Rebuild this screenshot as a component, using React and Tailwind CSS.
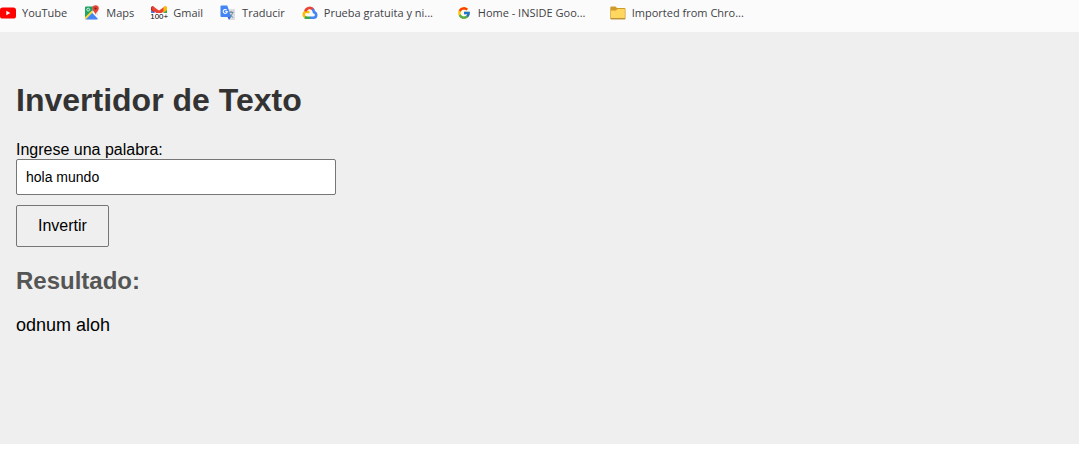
import { useState } from "react";
import { FcGoogle } from "react-icons/fc";

function YouTubeIcon() {
  return (
    <svg viewBox="0 0 16 16" className="size-4 shrink-0" aria-hidden="true">
      <rect x="0" y="2.5" width="16" height="11" rx="2.6" fill="#f00" />
      <path d="M6.3 5.7v4.6l4-2.3z" fill="#fff" />
    </svg>
  );
}

function MapsIcon() {
  return (
    <svg viewBox="0 0 16 16" className="size-4 shrink-0" aria-hidden="true">
      <rect x="1" y="1.6" width="13" height="13" rx="1.2" fill="#e8eaed" />
      <path d="M2.2 1.6H9L8.5 6 1 13V2.8q0-1.2 1.2-1.2z" fill="#1fa463" />
      <path d="M1.4 14.2 8 7.7l5.9 6.1q-.3.8-1.2.8H2.2z" fill="#4285f4" />
      <path d="M1 12.2 7.6 5.8l1.3 1.3-7.3 7.3Q1 14 1 13.2z" fill="#fdd835" />
      <path d="m8.4 7.6 1-1 4.6 4.6v2.4z" fill="#fff" />
      <circle cx="4.2" cy="4.6" r="1.4" fill="none" stroke="#fff" strokeWidth=".8" />
      <path d="M11.6.3a3.2 3.2 0 0 0-3.2 3.2c0 2.5 2.7 3.2 3.2 6.4.5-3.2 3.2-3.9 3.2-6.4A3.2 3.2 0 0 0 11.6.3z" fill="#ea4335" />
      <circle cx="11.6" cy="3.5" r="1.1" fill="#7b231b" />
    </svg>
  );
}

function GmailIcon() {
  return (
    <span className="relative size-4 shrink-0" aria-hidden="true">
      <svg viewBox="0 0 16 16" className="size-4">
        <path d="M0 3.2 3.5 5v8H1q-1 0-1-1z" fill="#4285f4" />
        <path d="M16 3.2 12.5 5v8H15q1 0 1-1z" fill="#34a853" />
        <path d="M3.5 2.5 2 1.3Q0 .6 0 2.7V5l3.5 2.7z" fill="#c5221f" />
        <path d="M1.5 1 8 5.5 14.5 1 15 4.8l-7 5.3-7-5.3z" fill="#ea4335" />
        <path d="m12.5 2.5 1.5-1.2q2-.7 2 1.4V5l-3.5 2.7z" fill="#fbbc04" />
      </svg>
      <span className="absolute inset-x-0 bottom-0 flex h-2 items-center justify-center bg-white font-['Liberation_Sans',Arial,sans-serif] text-[8px] leading-none text-black">100+</span>
    </span>
  );
}

function TranslateIcon() {
  return (
    <svg viewBox="0 0 16 16" className="size-4 shrink-0" aria-hidden="true">
      <path d="M6 4h8q1 0 1 1v9q0 1-1 1H9.7z" fill="#dadce0" />
      <path d="M8.4 7.3h5.2M11 6v1.3M12.7 7.3c-.4 2-1.6 3.6-3.2 4.7M9.5 9c.8 1.4 2 2.6 3.6 3.5" fill="none" stroke="#607d8b" strokeWidth=".9" />
      <path d="M1.5.5h5.8L11 12H1.5q-1 0-1-1V1.5q0-1 1-1z" fill="#4285f4" />
      <path d="M7.5 12H11l-2 3z" fill="#3367d6" />
      <path d="M6.7 5.1a2 2 0 1 0 .5 1.5H5.3" fill="none" stroke="#fff" strokeWidth="1.1" />
    </svg>
  );
}

function CloudIcon() {
  return (
    <svg viewBox="0 0 16 16" className="size-4 shrink-0" aria-hidden="true" fill="none" strokeWidth="2.6">
      <path d="M5 12.7a3.2 3.2 0 0 1-2.7-4.9Q3.2 6.6 4.7 6.5q1.2 0 2.3 1.6" stroke="#fbbc04" />
      <path d="M3.3 6.3C4.5 2.5 9.3 1.6 11.6 5.1" stroke="#ea4335" />
      <path d="M10.6 4.3q1.2 1.1 1.4 2.9 2.2.7 2.2 2.8 0 2.6-2.7 2.7H8" stroke="#4285f4" />
      <path d="M3 12.1q.8.6 2 .6h3.3" stroke="#34a853" />
    </svg>
  );
}

function GoogleIcon() {
  return <FcGoogle className="size-4 shrink-0 p-px" aria-hidden="true" />;
}

function FolderIcon() {
  return (
    <svg viewBox="0 0 16 16" className="size-4 shrink-0" aria-hidden="true">
      <path d="M.3 2.6q0-1 1-1H5.5L7 3h7.5q1 0 1 1v9.2q0 1-1 1H1.3q-1 0-1-1z" fill="#cf9a2a" />
      <path d="M1 5.5H6L7.5 4h7.3v8.5q0 .8-.8.8H1.8q-.8 0-.8-.8z" fill="#ffd75e" />
      <path d="M.8 13.8h14.4" stroke="#a88232" strokeWidth=".8" />
    </svg>
  );
}

const bookmarks = [
  { label: "YouTube", Icon: YouTubeIcon },
  { label: "Maps", Icon: MapsIcon },
  { label: "Gmail", Icon: GmailIcon },
  { label: "Traducir", Icon: TranslateIcon },
  { label: "Prueba gratuita y ni...", Icon: CloudIcon, long: true },
  { label: "Home - INSIDE Goo...", Icon: GoogleIcon, long: true },
  { label: "Imported from Chro...", Icon: FolderIcon, long: true },
];

export default function App() {
  const [word, setWord] = useState("hola mundo");
  const [result, setResult] = useState("odnum aloh");

  function handleSubmit(event) {
    event.preventDefault();
    setResult([...word].reverse().join(""));
  }

  return (
    <div className="bg-white font-['Liberation_Sans',Arial,sans-serif] text-black">
      <nav aria-label="Marcadores" className="flex h-8 items-start gap-[17px] overflow-hidden bg-[#fbfbfb] pt-1 font-['Open_Sans','Segoe_UI',sans-serif] text-[11px] text-[#3f4246]">
        {bookmarks.map(({ label, Icon, long }) => (
          <a key={label} href="#" className={`flex h-[18px] shrink-0 items-center gap-1.5 whitespace-nowrap ${long ? "w-[137px]" : ""}`}>
            <Icon />
            {label}
          </a>
        ))}
      </nav>
      <main className="bg-[#efefef] px-4 pt-[50px] pb-[108px]">
        <h1 className="text-[32px] leading-9 font-bold text-[#333]">Invertidor de Texto</h1>
        <form onSubmit={handleSubmit} className="mt-[22px] flex flex-col items-start">
          <label htmlFor="word" className="text-base leading-[19px]">Ingrese una palabra:</label>
          <input
            id="word"
            type="text"
            value={word}
            onChange={(event) => setWord(event.target.value)}
            className="h-9 w-80 max-w-full rounded-xs border border-[#767676] bg-white px-[9px] text-sm"
          />
          <button type="submit" className="mt-2.5 h-[42px] rounded-xs border border-[#767676] bg-[#efefef] px-[21px] text-base">
            Invertir
          </button>
        </form>
        <h2 className="mt-5 text-2xl leading-7 font-bold text-[#555]">Resultado:</h2>
        <p className="mt-5 text-lg leading-[21px]">{result}</p>
      </main>
    </div>
  );
}
